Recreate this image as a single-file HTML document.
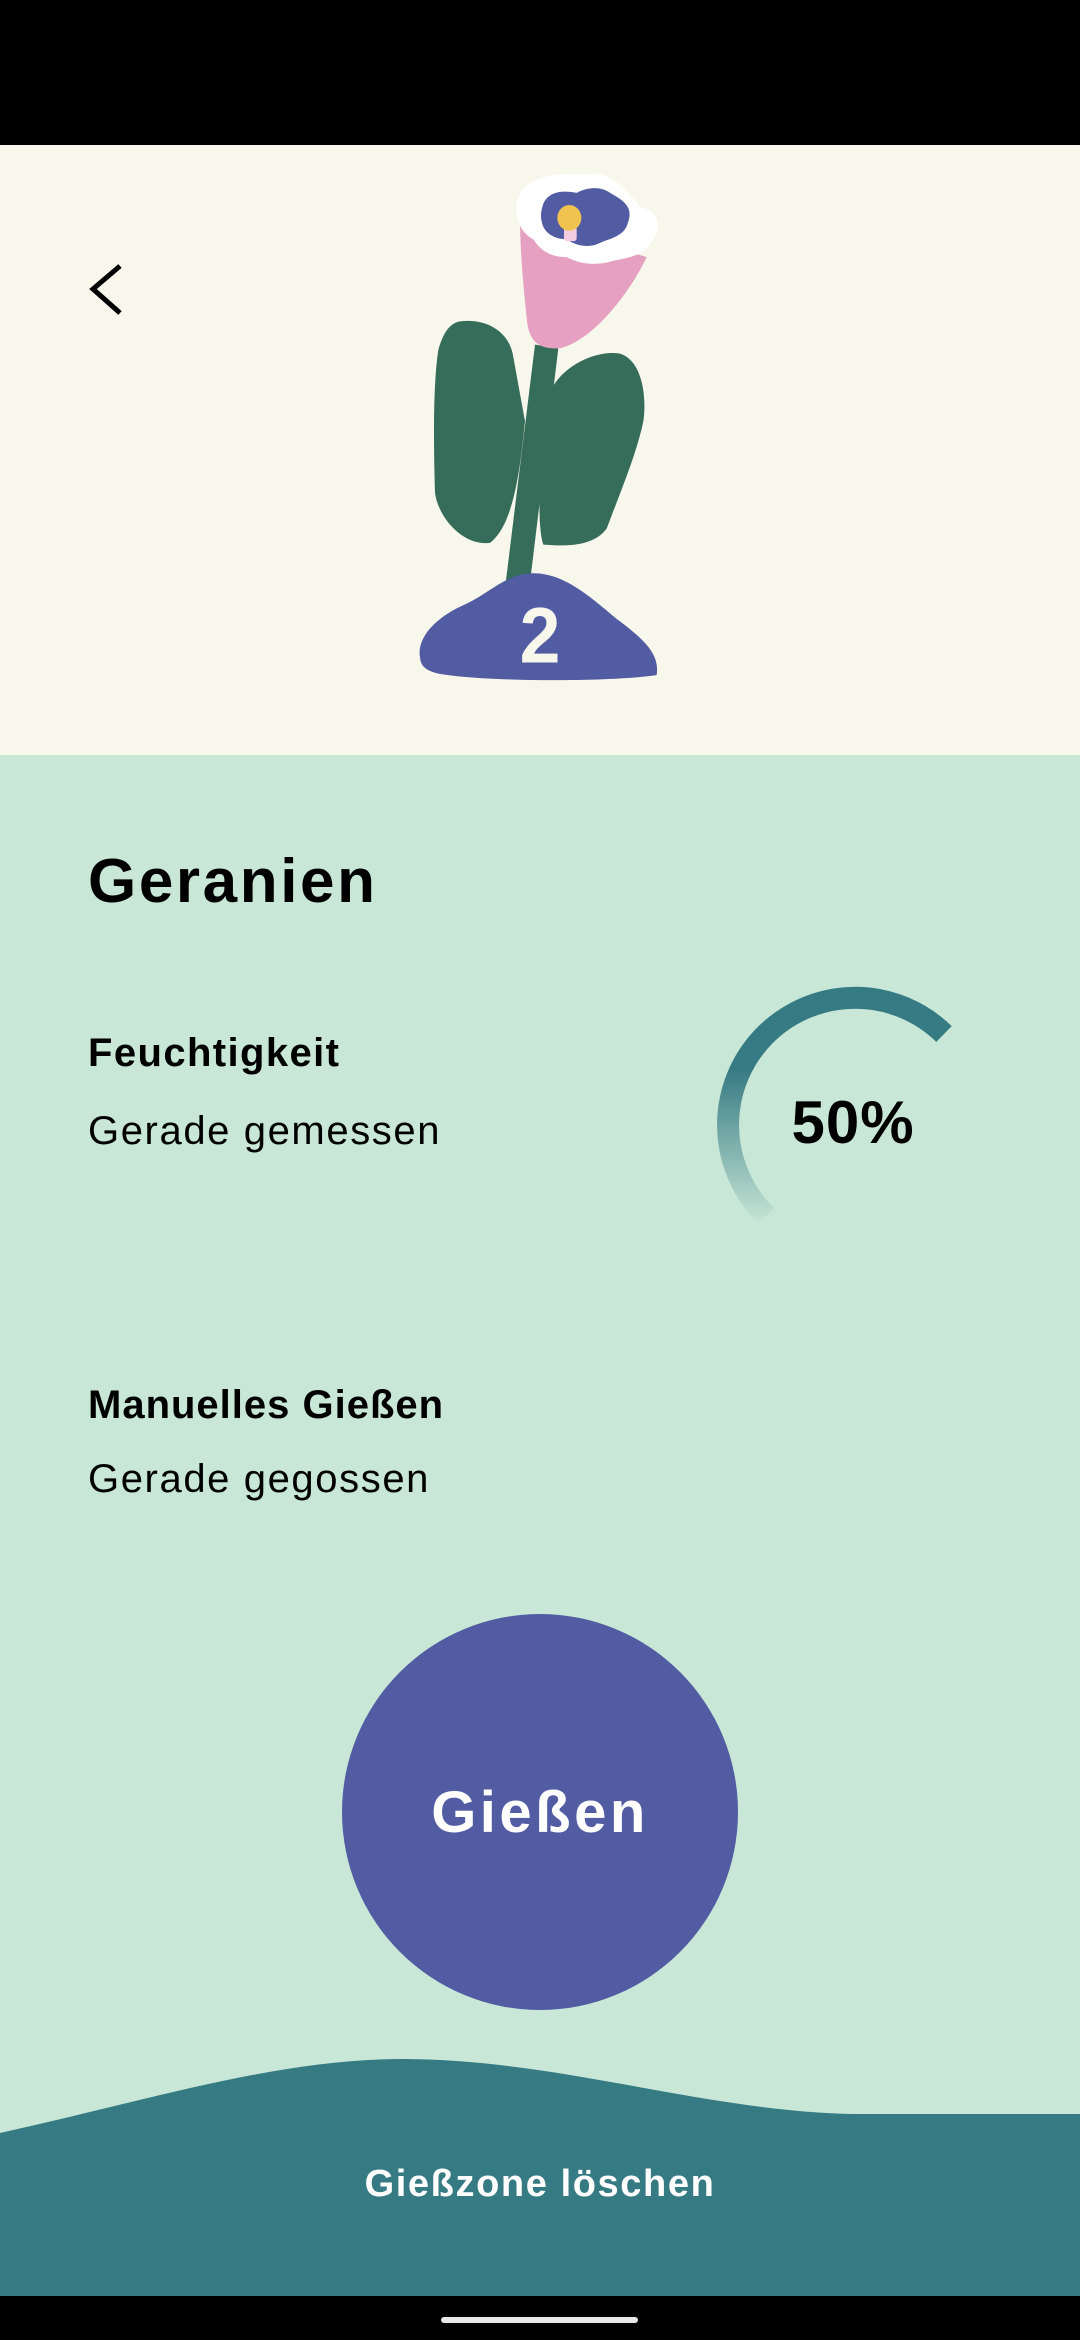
<!DOCTYPE html>
<html><head><meta charset="utf-8"><style>
html,body{margin:0;padding:0}
body{width:1080px;height:2340px;position:relative;overflow:hidden;background:#c8e7d6;font-family:"Liberation Sans",sans-serif}
.abs{position:absolute}
.t{position:absolute;left:88px;color:#000;white-space:nowrap}
</style></head><body>
<div class="abs" style="left:0;top:0;width:1080px;height:145px;background:#000"></div>
<div class="abs" style="left:0;top:145px;width:1080px;height:610px;background:#f8f7eb"></div>
<svg class="abs" style="left:0;top:0" width="200" height="400"><path d="M120,266 L93,289 L120,313" fill="none" stroke="#000" stroke-width="5"/></svg>
<svg class="abs" style="left:380px;top:150px" width="320" height="560" viewBox="0 0 960 1568" preserveAspectRatio="none">
<path d="M465,545 L535,555 L452,1195 L378,1205Z" fill="#356c5a"/>
<path d="M240,480 C320,470 390,510 400,580 L435,760 C420,900 400,1050 330,1100 C250,1110 175,1030 165,960 C160,800 160,650 175,560 C190,510 210,485 240,480Z" fill="#356c5a"/>
<path d="M520,660 C560,600 650,560 720,570 C790,590 800,700 790,760 C770,850 720,960 680,1060 C640,1110 560,1110 490,1105 C470,1050 480,900 490,820 Z" fill="#356c5a"/>
<path d="M420,190 L800,300 C760,380 650,530 540,555 C470,560 445,530 440,470 C430,380 420,280 420,190Z" fill="#e6a1c2"/>
<path d="M410,150 C420,100 470,80 500,75 C560,60 600,70 640,65 C700,70 740,110 780,160 C830,170 850,210 820,250 C800,290 760,300 700,310 C650,325 600,320 560,300 C510,300 480,280 460,250 C420,230 405,190 410,150Z" fill="#fff"/>
<path d="M490,150 C510,110 560,115 590,120 C620,105 660,100 690,120 C730,140 760,160 745,200 C735,240 700,245 660,260 C630,275 590,270 560,250 C520,250 490,230 485,200 C480,180 485,165 490,150Z" fill="#525ca3"/>
<rect x="552" y="215" width="38" height="40" rx="8" fill="#f5cde0"/>
<circle cx="568" cy="190" r="36" fill="#f0c250"/>
<path d="M120,1420 C110,1370 160,1310 260,1270 C330,1240 380,1185 460,1185 C560,1185 640,1260 720,1320 C790,1370 840,1410 830,1470 C700,1490 300,1490 170,1465 C130,1455 122,1440 120,1420Z" fill="#525ca3"/>
<text x="480" y="1435" text-anchor="middle" font-family="Liberation Sans" font-weight="bold" font-size="220" fill="#f8f7eb">2</text>
</svg>
<div class="t" style="top:846px;font-size:62px;font-weight:bold;letter-spacing:2.6px">Geranien</div>
<div class="t" style="top:1031px;font-size:40px;font-weight:bold;letter-spacing:1.4px">Feuchtigkeit</div>
<div class="t" style="top:1109px;font-size:40px;letter-spacing:1.6px">Gerade gemessen</div>
<div class="t" style="top:1383px;font-size:40px;font-weight:bold;letter-spacing:1px">Manuelles Gießen</div>
<div class="t" style="top:1457px;font-size:40px;letter-spacing:1.6px">Gerade gegossen</div>
<svg class="abs" style="left:0;top:0" width="1080" height="2340">
<defs><linearGradient id="g" x1="0" y1="985" x2="0" y2="1225" gradientUnits="userSpaceOnUse">
<stop offset="0" stop-color="#367a84"/><stop offset="0.35" stop-color="#367a84"/><stop offset="1" stop-color="#c8e7d6"/></linearGradient></defs>
<path d="M766.4,1215.9 A127 127 0 1 1 944,1034" fill="none" stroke="url(#g)" stroke-width="22"/>
<text x="853" y="1143" text-anchor="middle" font-family="Liberation Sans" font-weight="bold" font-size="60" letter-spacing="1" fill="#000">50%</text>
<circle cx="540" cy="1812" r="198" fill="#525ca3"/>
<text x="540" y="1832" text-anchor="middle" font-family="Liberation Sans" font-weight="bold" font-size="58" letter-spacing="3.5" fill="#fff">Gießen</text>
<path d="M0,2133 C150,2100 280,2058 406,2059 C560,2060 700,2110 850,2114 L1080,2114 L1080,2296 L0,2296Z" fill="#367a84"/>
<text x="540" y="2196" text-anchor="middle" font-family="Liberation Sans" font-weight="bold" font-size="38" letter-spacing="1.6" fill="#fff">Gießzone löschen</text>
<rect x="0" y="2296" width="1080" height="44" fill="#000"/>
<rect x="441" y="2317" width="197" height="6" rx="3" fill="#e8e8e8"/>
</svg>
</body></html>
